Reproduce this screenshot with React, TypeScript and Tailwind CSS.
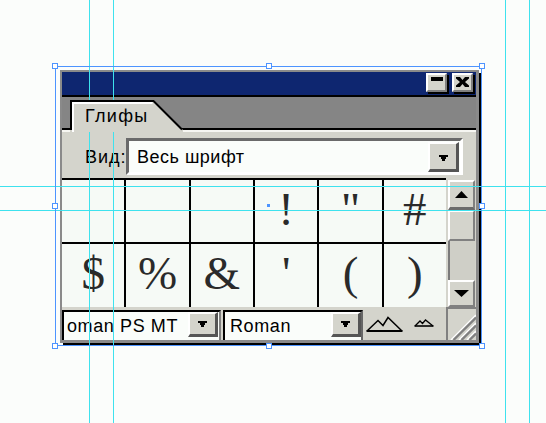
import React from "react";

function DropArrow({ className = "" }: { className?: string }) {
  return (
    <svg width="9" height="6" viewBox="0 0 9 6" shapeRendering="crispEdges" className={className}>
      <path d="M0 0H9V2H7V4H6V6H3V4H2V2H0Z" fill="#000" />
    </svg>
  );
}

function DropBtn({ className = "", arrowClass = "" }: { className?: string; arrowClass?: string }) {
  return (
    <div
      className={
        "flex shrink-0 items-center justify-center bg-[#d4d4cc] border-t-2 border-l-2 border-white border-r-[3px] border-b-[3px] border-r-[#555555] border-b-[#555555] " +
        className
      }
    >
      <DropArrow className={arrowClass} />
    </div>
  );
}

function TitleBtn({ children }: { children: React.ReactNode }) {
  return (
    <div className="flex h-[19px] w-[21px] justify-center border-2 border-t-white border-l-white border-r-[#808080] border-b-[#808080] bg-[#d4d4cc] pt-[2px] shadow-[2px_2px_0_#000]">
      {children}
    </div>
  );
}

function Glyph({ ch }: { ch: string }) {
  return (
    <div className="flex justify-center bg-[#f6faf6] pt-[6px] font-['Liberation_Serif',serif] text-[47px] leading-[47px] text-[#2a2a2a]">
      {ch}
    </div>
  );
}

function Window() {
  const row1 = ["", "", "", "!", '"', "#"];
  const row2 = ["$", "%", "&", "'", "(", ")"];
  return (
    <div className="flex h-[273px] w-[419px] flex-col border-t-2 border-l-2 border-r-[3px] border-b-[3px] border-[#8a8a8a] shadow-[3px_3px_0_#000]">
      {/* title bar */}
      <div className="flex h-[25px] items-start justify-end gap-[5px] border-b-2 border-black bg-[#0e2670] pr-[3px] pt-[1px]">
        <TitleBtn>
          <div className="h-[4px] w-[12px] bg-black" />
        </TitleBtn>
        <TitleBtn>
          <svg width="13" height="10" viewBox="0 0 13 10">
            <path d="M0 0H4L6.5 3L9 0H13V1.5L9 5L13 8.5V10H9L6.5 7L4 10H0V8.5L4 5L0 1.5Z" fill="#000" />
          </svg>
        </TitleBtn>
      </div>

      {/* tab strip */}
      <div className="flex h-[33px] items-end border-b-2 border-black bg-[#858585] pl-[8px]">
        <div className="relative z-10 -mb-[2px] flex h-[30px] w-[112px] items-center pl-[15px] pt-[1px] text-[18px] leading-none tracking-[1.3px] text-black">
          <svg
            className="absolute left-0 top-0 overflow-visible"
            width="113"
            height="32"
            viewBox="0 0 113 32"
          >
            <polygon points="0,0 83,0 113,30 113,32 0,32" fill="#d4d4cc" />
            <path d="M1 30V1H83.5L112 29.5" stroke="#000" strokeWidth="2" fill="none" />
            <path d="M3 32V3H82.5" stroke="#ffffff" strokeWidth="2" fill="none" />
          </svg>
          <span className="relative">Глифы</span>
        </div>
      </div>

      {/* body */}
      <div className="flex flex-1 flex-col border-t-2 border-[#f6f6f2] bg-[#d4d4cc]">
        {/* view row */}
        <div className="mt-[6px] flex h-[37px] items-center pl-[23px] text-[18px] leading-none tracking-[0.5px] text-black">
          <span className="w-[41px] tracking-[1px]">Вид:</span>
          <div className="flex h-[37px] w-[337px] items-center justify-between border-[3px] border-t-[#6a6a6a] border-l-[#6a6a6a] border-r-white border-b-white bg-[#fafdfa] pl-[8px] pr-[1px]">
            <span>Весь шрифт</span>
            <DropBtn className="h-[30px] w-[31px]" arrowClass="mt-[4px]" />
          </div>
        </div>

        {/* glyph grid + scrollbar */}
        <div className="mt-[3px] flex h-[129px]">
          <div className="grid w-[384px] grid-cols-6 grid-rows-[62px_63px] gap-[2px] border-t-2 border-black bg-black">
            {row1.map((c, i) => (
              <Glyph key={"a" + i} ch={c} />
            ))}
            {row2.map((c, i) => (
              <Glyph key={"b" + i} ch={c} />
            ))}
          </div>
          <div className="mt-[2px] flex h-[127px] w-[30px] flex-col bg-[#d4d4cc] pl-[2px] pr-[1px]">
            <div className="flex h-[30px] items-center justify-center border-t-2 border-l-2 border-white border-r-2 border-b-[3px] border-r-[#808080] border-b-[#6a6a6a] bg-[#d4d4cc]">
              <svg width="13" height="7" viewBox="0 0 13 7">
                <polygon points="6.5,0 13,7 0,7" fill="#000" />
              </svg>
            </div>
            <div className="h-[31px] border-2 border-t-white border-l-white border-r-[#808080] border-b-[#808080] bg-[#d4d4cc]" />
            <div className="h-[39px] border-l-2 border-[#7a7a7a] bg-[#cfcfc7]" />
            <div className="flex h-[27px] items-center justify-center border-2 border-t-white border-l-white border-r-[#808080] border-b-[#808080] bg-[#d4d4cc]">
              <svg width="15" height="7" viewBox="0 0 15 7">
                <polygon points="0,0 15,0 7.5,7" fill="#000" />
              </svg>
            </div>
          </div>
        </div>

        {/* bottom bar */}
        <div className="flex h-[33px] items-start text-[18px] leading-none tracking-[0.6px] text-black">
          <div className="mt-[3px] flex h-[30px] w-[159px] items-start justify-between border-t-2 border-l-2 border-black border-r-2 border-r-[#808080] bg-[#fafdfa] pl-[3px] pr-[1px]">
            <span className="self-center">oman PS MT</span>
            <DropBtn className="h-[25px] w-[30px]" />
          </div>
          <div className="ml-[2px] mt-[3px] flex h-[30px] w-[140px] items-start justify-between border-t-2 border-l-2 border-black border-r-2 border-r-[#666666] bg-[#fafdfa] pl-[5px]">
            <span className="self-center">Roman</span>
            <DropBtn className="h-[25px] w-[30px]" />
          </div>
          <div className="flex h-[33px] w-[83px] items-end pb-[8px] pl-[3px]">
            <svg width="37" height="16" viewBox="0 0 37 16">
              <path d="M1 15L12 4.5L17 9.5L22 1.5L36 15" stroke="#000" strokeWidth="1.5" fill="none" />
              <path d="M0.5 15H36.5" stroke="#000" strokeWidth="2" />
            </svg>
            <svg className="mb-[5px] ml-[11px]" width="20" height="8" viewBox="0 0 20 8">
              <path d="M1 7L6 2L8.5 4.5L11.5 1L19 7" stroke="#000" strokeWidth="1.3" fill="none" />
              <path d="M0.5 7H19.5" stroke="#000" strokeWidth="1.6" />
            </svg>
          </div>
          <div className="relative h-[33px] w-[30px] border-t-2 border-l-2 border-[#808080] bg-[#d4d4cc]">
            <svg className="absolute bottom-0 right-0" width="26" height="26" viewBox="0 0 26 26">
              <path d="M1 26L26 1" stroke="#ffffff" strokeWidth="1.6" />
              <path d="M3.5 26L26 3.5" stroke="#808080" strokeWidth="2.4" />
              <path d="M9 26L26 9" stroke="#ffffff" strokeWidth="1.6" />
              <path d="M11.5 26L26 11.5" stroke="#808080" strokeWidth="2.4" />
              <path d="M17 26L26 17" stroke="#ffffff" strokeWidth="1.6" />
              <path d="M19.5 26L26 19.5" stroke="#808080" strokeWidth="2.4" />
            </svg>
          </div>
        </div>
      </div>
    </div>
  );
}

export default function App() {
  return (
    <div className="relative h-[423px] w-[546px] overflow-hidden bg-[#fbfdfb] font-['Liberation_Sans',Arial,sans-serif]">
      <div className="pl-[60px] pt-[70px]">
        <Window />
      </div>

      {/* guides */}
      <div className="pointer-events-none absolute left-[89px] top-0 h-full w-px bg-[#3ee2ee]" />
      <div className="pointer-events-none absolute left-[113px] top-0 h-full w-px bg-[#3ee2ee]" />
      <div className="pointer-events-none absolute left-[505px] top-0 h-full w-px bg-[#3ee2ee]" />
      <div className="pointer-events-none absolute left-[529px] top-0 h-full w-px bg-[#3ee2ee]" />
      <div className="pointer-events-none absolute left-0 top-[186px] h-px w-full bg-[#3ee2ee]" />
      <div className="pointer-events-none absolute left-0 top-[210px] h-px w-full bg-[#3ee2ee]" />

      {/* selection frame */}
      <div className="pointer-events-none absolute left-[55px] top-[66px] h-[280px] w-[427px] border border-[#4d94ff]" />
      <div className="absolute left-[52px] top-[63px] h-[6px] w-[6px] border border-[#4d94ff] bg-white" />
      <div className="absolute left-[266px] top-[63px] h-[6px] w-[6px] border border-[#4d94ff] bg-white" />
      <div className="absolute left-[479px] top-[63px] h-[6px] w-[6px] border border-[#4d94ff] bg-white" />
      <div className="absolute left-[52px] top-[203px] h-[6px] w-[6px] border border-[#4d94ff] bg-white" />
      <div className="absolute left-[479px] top-[203px] h-[6px] w-[6px] border border-[#4d94ff] bg-white" />
      <div className="absolute left-[52px] top-[343px] h-[6px] w-[6px] border border-[#4d94ff] bg-white" />
      <div className="absolute left-[266px] top-[343px] h-[6px] w-[6px] border border-[#4d94ff] bg-white" />
      <div className="absolute left-[479px] top-[343px] h-[6px] w-[6px] border border-[#4d94ff] bg-white" />
      <div className="absolute left-[267px] top-[204px] h-[3px] w-[3px] bg-[#4d94ff]" />
    </div>
  );
}
